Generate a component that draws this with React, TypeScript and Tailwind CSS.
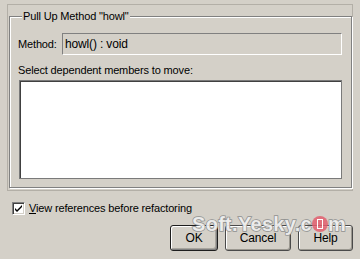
export default function App() {
  return (
    <div className="relative w-[360px] h-[259px] overflow-hidden bg-[#d4d0c8] text-[11px] leading-[13px] tracking-[-0.15px] text-black font-['Liberation_Sans',Arial,sans-serif]">
      {/* outer composite */}
      <div className="mx-[7px] mt-[4px] h-[187px] border border-[#b3afa7]">
        <fieldset className="ml-[1px] mt-[5px] w-[343px] h-[178px] border border-[#808080] shadow-[inset_1px_1px_0_#ffffff,1px_1px_0_#ffffff] pl-[8px] pr-[9px] pb-[8px]">
          <legend className="ml-[4px] px-[1px] bg-[#d4d0c8] leading-[13px]">
            Pull Up Method "howl"
          </legend>

          <div className="mt-[10px] flex items-center h-[22px]">
            <span className="w-[44px] shrink-0">Method:</span>
            <div className="flex-1 h-[22px] flex items-center pl-[2px] border border-t-[#808080] border-l-[#808080] border-b-white border-r-white bg-[#d4d0c8] text-[12px]">
              howl() : void
            </div>
          </div>

          <div className="mt-[9px]">Select dependent members to move:</div>

          <div className="mt-[3px] ml-[1px] h-[99px] bg-white border border-[#7a7a7a] shadow-[inset_1px_1px_0_#404040]" />
        </fieldset>
      </div>

      {/* checkbox */}
      <div className="mt-[11px] pl-[12px] flex items-center gap-[4px]">
        <div className="w-[13px] h-[13px] bg-white border border-t-[#808080] border-l-[#808080] border-b-white border-r-white shadow-[inset_1px_1px_0_#404040,inset_-1px_-1px_0_#d4d0c8] flex items-center justify-center">
          <svg width="9" height="9" viewBox="0 0 9 9">
            <path d="M1 4 L3 6 L8 1 L8 3 L3 8 L1 6 Z" fill="#000" />
          </svg>
        </div>
        <span>
          <span className="underline">V</span>iew references before refactoring
        </span>
      </div>

      {/* buttons */}
      <div className="mt-[10px] pr-[7px] flex justify-end gap-[7px]">
        <button className="w-[48px] h-[26px] rounded-[3px] border border-[#1e1e1e] bg-[#d4d0c8] shadow-[inset_1px_1px_0_#ffffff,inset_-1px_-1px_0_#808080,inset_-2px_-2px_0_#a8a59e] text-[12px]">
          OK
        </button>
        <button className="w-[66px] h-[26px] rounded-[3px] border border-[#4a4a4a] bg-[#d4d0c8] shadow-[inset_1px_1px_0_#ffffff,inset_-1px_-1px_0_#9a978f] text-[12px]">
          Cancel
        </button>
        <button className="w-[55px] h-[26px] rounded-[3px] border border-[#4a4a4a] bg-[#d4d0c8] shadow-[inset_1px_1px_0_#ffffff,inset_-1px_-1px_0_#9a978f] text-[12px]">
          Help
        </button>
      </div>

      {/* watermark */}
      <div className="absolute left-[192px] top-[214px] flex items-center text-[20px] leading-[20px] font-bold tracking-[0.3px] text-[#f4f4f4]/90 [-webkit-text-stroke:1.5px_#909090] [paint-order:stroke_fill] select-none">
        <span>Soft.Yesky.c</span>
        <span className="w-[16px] h-[16px] rounded-full bg-[#e25f6e]/85 flex items-center justify-center">
          <span className="w-[6px] h-[10px] border border-white" />
        </span>
        <span>m</span>
      </div>
    </div>
  );
}
